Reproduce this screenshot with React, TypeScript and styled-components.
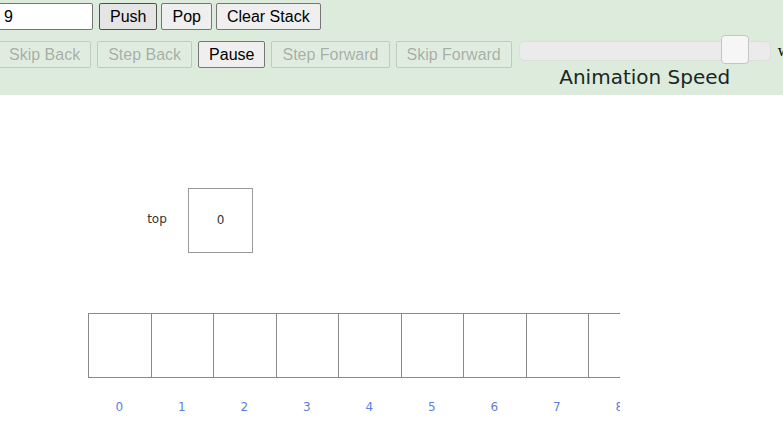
import styled, { createGlobalStyle } from 'styled-components';

const GlobalStyle = createGlobalStyle`
	html, body {
		margin: 0;
		padding: 0;
		background: #ffffff;
		overflow: hidden;
	}
	body {
		font-family: "Liberation Sans", Arial, sans-serif;
	}
`;

const Header = styled.header`
	box-sizing: border-box;
	height: 95px;
	background: #dcebdc;
	padding-top: 3px;
	overflow: hidden;
	white-space: nowrap;
`;

const Row = styled.div<{ $offset: number; $top?: number; $gap: number }>`
	display: flex;
	align-items: flex-start;
	gap: ${(p) => p.$gap}px;
	margin-left: ${(p) => p.$offset}px;
	margin-top: ${(p) => p.$top ?? 0}px;
`;

const TextInput = styled.input`
	box-sizing: border-box;
	width: 96px;
	height: 27px;
	margin-right: 2px;
	padding: 1px 6px;
	border: 1px solid #767676;
	border-radius: 2px;
	background: #ffffff;
	font: 16px "Liberation Sans", Arial, sans-serif;
	color: #000;
	flex-shrink: 0;
`;

const Button = styled.button<{ $pressed?: boolean }>`
	box-sizing: border-box;
	height: 27px;
	padding: 1px 10px;
	border-radius: 2px;
	font: 16px "Liberation Sans", Arial, sans-serif;
	flex-shrink: 0;
	border: 1px solid ${(p) => (p.$pressed ? '#4f4f4f' : '#767676')};
	background: ${(p) => (p.$pressed ? '#e5e5e5' : '#efefef')};
	color: #000;

	&:disabled {
		border-color: rgba(118, 118, 118, 0.3);
		background: rgba(239, 239, 239, 0.3);
		color: rgba(16, 16, 16, 0.3);
	}
`;

const SpeedControl = styled.div`
	display: flex;
	flex-direction: column;
	align-items: center;
	margin-left: 1px;
	flex-shrink: 0;
`;

const Track = styled.div`
	position: relative;
	box-sizing: border-box;
	width: 252px;
	height: 20px;
	background: #ebebeb;
	border: 1px solid #dddddd;
	border-radius: 5px;
`;

const Thumb = styled.div`
	position: absolute;
	top: -7px;
	box-sizing: border-box;
	width: 28px;
	height: 29px;
	background: #f6f6f6;
	border: 1px solid #c5c5c5;
	border-radius: 4px;
`;

const SpeedLabel = styled.div`
	margin-top: 4px;
	font: 20px "DejaVu Sans", Verdana, sans-serif;
	color: #1b2626;
`;

const SizeLabel = styled.span`
	margin-left: 1px;
	margin-top: 1px;
	font: 16px "Liberation Serif", "Times New Roman", serif;
`;

const Canvas = styled.div`
	position: relative;
	width: 620px;
	height: 329px;
	overflow: hidden;
	background: #ffffff;
	font-family: "DejaVu Sans", Verdana, sans-serif;
	font-size: 12px;
	color: #333;
`;

const TopLabel = styled.div`
	position: absolute;
	left: 130px;
	top: 116px;
	width: 54px;
	text-align: center;
	line-height: 16px;
`;

const TopBox = styled.div`
	position: absolute;
	left: 188px;
	top: 93px;
	box-sizing: border-box;
	width: 65px;
	height: 65px;
	padding-bottom: 2px;
	border: 1px solid #999999;
	display: flex;
	align-items: center;
	justify-content: center;
`;

const ArrayGroup = styled.div`
	position: absolute;
	left: 88px;
	top: 218px;
	display: flex;
	flex-direction: column;
`;

const Cells = styled.div`
	display: flex;
`;

const Cell = styled.div`
	box-sizing: border-box;
	flex: 0 0 62.5px;
	height: 65px;
	border-top: 1px solid #8a8a8a;
	border-bottom: 1px solid #8a8a8a;
	border-left: 1px solid #8a8a8a;
`;

const Indices = styled.div`
	display: flex;
	margin-top: 21px;
`;

const Index = styled.div`
	flex: 0 0 62.5px;
	text-align: center;
	color: #5b7fe0;
	line-height: 16px;
`;

const slots = Array.from({ length: 10 }, (_, i) => i);

export default function App() {
	const speed = 201;

	return (
		<>
			<GlobalStyle />
			<Header>
				{/* Stack operations */}
				<Row $offset={-3} $gap={4}>
					<TextInput defaultValue="9" />
					<Button $pressed>Push</Button>
					<Button>Pop</Button>
					<Button>Clear Stack</Button>
				</Row>
				{/* Animation controls */}
				<Row $offset={-2} $top={11} $gap={6}>
					<Button disabled>Skip Back</Button>
					<Button disabled>Step Back</Button>
					<Button>Pause</Button>
					<Button disabled>Step Forward</Button>
					<Button disabled>Skip Forward</Button>
					<SpeedControl>
						<Track>
							<Thumb style={{ left: speed }} />
						</Track>
						<SpeedLabel>Animation Speed</SpeedLabel>
					</SpeedControl>
					<SizeLabel>w:</SizeLabel>
				</Row>
			</Header>
			<Canvas>
				<TopLabel>top</TopLabel>
				<TopBox>0</TopBox>
				<ArrayGroup>
					<Cells>
						{slots.map((i) => (
							<Cell key={i} />
						))}
					</Cells>
					<Indices>
						{slots.map((i) => (
							<Index key={i}>{i}</Index>
						))}
					</Indices>
				</ArrayGroup>
			</Canvas>
		</>
	);
}
